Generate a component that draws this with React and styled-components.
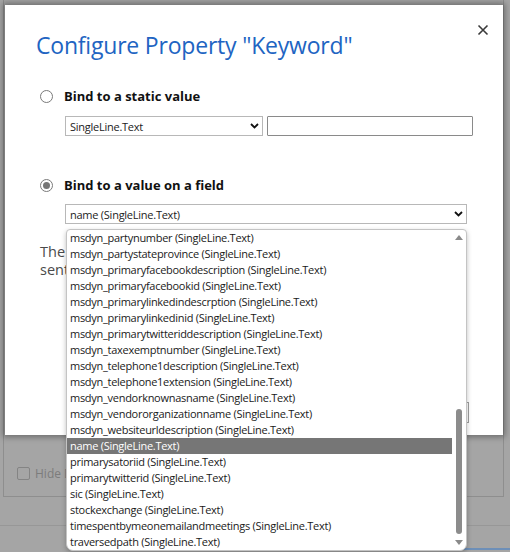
import React from "react";
import styled, { createGlobalStyle } from "styled-components";

const GlobalStyle = createGlobalStyle`
  html, body {
    margin: 0;
    padding: 0;
    width: 510px;
    height: 552px;
    overflow: hidden;
    background: #a3a3a3;
    font-family: "Segoe UI", "Open Sans", "Noto Sans", sans-serif;
  }
`;

const Page = styled.div`
  position: relative;
  width: 510px;
  height: 552px;
  background: #a5a5a5;
  display: flex;
  flex-direction: column;
`;

const BackPanel = styled.div`
  margin: 0 6px 0 3px;
  height: 497px;
  border: 1px solid #8e8e8e;
  border-top: none;
  box-sizing: border-box;
  display: flex;
  align-items: flex-end;
  padding: 0 0 14px 13px;
`;

const BackCheck = styled.label`
  display: flex;
  align-items: center;
  gap: 5px;
  font-size: 12px;
  color: #7c7c7c;
`;

const Box = styled.span`
  width: 11px;
  height: 11px;
  border: 1px solid #848484;
  border-radius: 2px;
`;

const BackFooter = styled.div`
  margin-top: 28px;
  height: 1px;
  background: #979797;
`;

const BottomBar = styled.div`
  margin: auto 0 2px 352px;
  height: 2px;
  display: flex;
  background: #3a5f8e;
  &::after {
    content: "";
    margin-left: 88px;
    flex: 1;
    background: #6d8fb8;
  }
`;

const Dialog = styled.div`
  position: absolute;
  left: 5px;
  top: 5px;
  width: 498px;
  height: 430px;
  background: #fff;
  box-shadow: 0 0 6px 2px rgba(0, 0, 0, 0.35);
  box-sizing: border-box;
  padding: 18px 14px 0 31px;
  display: flex;
  flex-direction: column;
`;

const Header = styled.div`
  display: flex;
  justify-content: space-between;
  align-items: flex-start;
`;

const Title = styled.h1`
  margin: 6px 0 0;
  font-size: 23px;
  font-weight: 400;
  line-height: 32px;
  color: #2164c2;
  letter-spacing: -0.2px;
`;

const Close = styled.button`
  border: none;
  background: none;
  padding: 0;
  margin: 1px 0 0;
  width: 12px;
  height: 12px;
  display: flex;
`;

const Option = styled.div`
  display: flex;
  align-items: center;
  gap: 11px;
  margin: ${p => p.$top}px 0 0 4px;
`;

const Radio = styled.span`
  width: 11px;
  height: 11px;
  border: 1px solid #7a7a7a;
  border-radius: 50%;
  display: flex;
  align-items: center;
  justify-content: center;
  &::after {
    content: "";
    width: 7px;
    height: 7px;
    border-radius: 50%;
    background: ${p => p.$checked ? "#767676" : "transparent"};
  }
`;

const Label = styled.span`
  font-size: 13px;
  line-height: 18px;
  font-weight: 700;
  color: #111;
`;

const FieldRow = styled.div`
  display: flex;
  gap: 4px;
  margin: ${p => p.$top}px 0 0 29px;
`;

const Select = styled.div`
  width: ${p => p.$w}px;
  height: 20px;
  box-sizing: border-box;
  border: 1px solid #b8b8b8;
  display: flex;
  align-items: center;
  justify-content: space-between;
  padding: 0 3px 0 4px;
  font-size: 11px;
  letter-spacing: -0.25px;
  color: #222;
`;

const TextInput = styled.div`
  width: 206px;
  height: 20px;
  box-sizing: border-box;
  border: 1px solid #8a8a8a;
  border-radius: 1px;
`;

const Description = styled.p`
  margin: 19px 0 0 4px;
  font-size: 14.5px;
  line-height: 18px;
  color: #4a4a4a;
`;

const Footer = styled.div`
  margin: auto 20px 12px 0;
  display: flex;
  justify-content: flex-end;
  gap: 8px;
`;

const Button = styled.div`
  width: 80px;
  height: 21px;
  border: 1px solid #a0a0a0;
  box-sizing: border-box;
`;

const List = styled.div`
  position: absolute;
  left: 66px;
  top: 229px;
  width: 401px;
  height: 322px;
  box-sizing: border-box;
  background: #fff;
  border: 1px solid #c4c4c4;
  border-radius: 4px 4px 7px 7px;
  box-shadow: 0 2px 5px rgba(0, 0, 0, 0.25);
  display: flex;
  overflow: hidden;
`;

const Items = styled.div`
  flex: 1;
  display: flex;
  flex-direction: column;
`;

const Item = styled.div`
  height: 16px;
  line-height: 16px;
  padding-left: 3px;
  font-size: 11px;
  letter-spacing: -0.28px;
  white-space: nowrap;
  color: ${p => p.$active ? "#fff" : "#1a1a1a"};
  background: ${p => p.$active ? "#767676" : "transparent"};
`;

const Scroll = styled.div`
  width: 14px;
  display: flex;
  flex-direction: column;
  align-items: center;
  padding: 5px 0 5px;
  box-sizing: border-box;
`;

const Track = styled.div`
  flex: 1;
  width: 6px;
  display: flex;
  flex-direction: column;
  justify-content: flex-end;
  padding: 4px 0 6px;
`;

const Thumb = styled.div`
  height: 125px;
  border-radius: 3px;
  background: #8c8c8c;
`;

const Chevron = () => (
  <svg width="9" height="6" viewBox="0 0 9 6">
    <path d="M1 1 L4.5 4.5 L8 1" fill="none" stroke="#111" strokeWidth="1.8" />
  </svg>
);

const Arrow = ({ down }) => (
  <svg width="8" height="5" viewBox="0 0 8 5">
    <path d={down ? "M0 0 H8 L4 5 Z" : "M0 5 H8 L4 0 Z"} fill="#8a8a8a" />
  </svg>
);

const items = [
  "msdyn_partynumber",
  "msdyn_partystateprovince",
  "msdyn_primaryfacebookdescription",
  "msdyn_primaryfacebookid",
  "msdyn_primarylinkedindescrption",
  "msdyn_primarylinkedinid",
  "msdyn_primarytwitteriddescription",
  "msdyn_taxexemptnumber",
  "msdyn_telephone1description",
  "msdyn_telephone1extension",
  "msdyn_vendorknownasname",
  "msdyn_vendororganizationname",
  "msdyn_websiteurldescription",
  "name",
  "primarysatoriid",
  "primarytwitterid",
  "sic",
  "stockexchange",
  "timespentbymeonemailandmeetings",
  "traversedpath",
];

export default function App() {
  return (
    <>
      <GlobalStyle />
      <Page>
        <BackPanel>
          <BackCheck>
            <Box />
            Hide Default Values
          </BackCheck>
        </BackPanel>
        <BackFooter />
        <BottomBar />

        <Dialog>
          <Header>
            <Title>Configure Property "Keyword"</Title>
            <Close aria-label="Close">
              <svg width="12" height="12" viewBox="0 0 12 12">
                <path d="M1.5 1.5 L10.5 10.5 M10.5 1.5 L1.5 10.5" stroke="#3a3a3a" strokeWidth="1.6" />
              </svg>
            </Close>
          </Header>

          <Option $top={26}>
            <Radio />
            <Label>Bind to a static value</Label>
          </Option>
          <FieldRow $top={11}>
            <Select $w={198}>
              SingleLine.Text
              <Chevron />
            </Select>
            <TextInput />
          </FieldRow>

          <Option $top={40}>
            <Radio $checked />
            <Label>Bind to a value on a field</Label>
          </Option>
          <FieldRow $top={10}>
            <Select $w={402}>
              name (SingleLine.Text)
              <Chevron />
            </Select>
          </FieldRow>

          <Description>
            The value of the selected field is used when the message is
            <br />
            sent.
          </Description>

          <Footer>
            <Button />
            <Button />
          </Footer>
        </Dialog>

        <List>
          <Items>
            {items.map(name => (
              <Item key={name} $active={name === "name"}>
                {name} (SingleLine.Text)
              </Item>
            ))}
          </Items>
          <Scroll>
            <Arrow />
            <Track>
              <Thumb />
            </Track>
            <Arrow down />
          </Scroll>
        </List>
      </Page>
    </>
  );
}
